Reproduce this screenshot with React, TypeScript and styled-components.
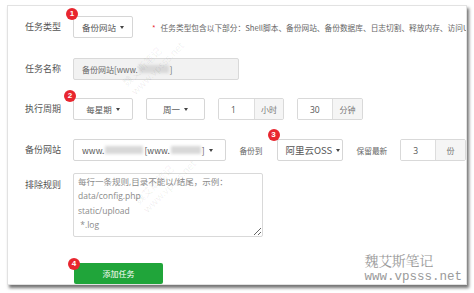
import React from 'react'
import styled, { createGlobalStyle } from 'styled-components'

const GlobalStyle = createGlobalStyle`
  html, body {
    margin: 0;
    padding: 0;
    background: #ffffff;
  }
  body {
    font-family: "Noto Sans CJK SC", "Open Sans", sans-serif;
    color: #555555;
  }
`;

const Blurred: React.FC<{ w: number }> = ({ w }) => <Blur style={{ width: w }} />;

const App: React.FC = () => {
  return (
    <>
      <GlobalStyle />
      <Page>
        <Panel>
          <Row>
            <Label>任务类型</Label>
            <Anchor>
              <Badge>1</Badge>
              <Select $w={60}>
                备份网站<Caret />
              </Select>
            </Anchor>
            <Hint>
              <Star>*</Star>任务类型包含以下部分：Shell脚本、备份网站、备份数据库、日志切割、释放内存、访问U
            </Hint>
          </Row>

          <Row $top={20}>
            <Label>任务名称</Label>
            <TextBox $w={166} $disabled>
              备份网站[www.<Blurred w={30} />]
            </TextBox>
          </Row>

          <Row $top={18}>
            <Label>执行周期</Label>
            <Anchor>
              <Badge $x={-9}>2</Badge>
              <Select $w={60} $center>
                每星期<Caret />
              </Select>
            </Anchor>
            <Select $w={59} $center $ml={13}>
              周一<Caret />
            </Select>
            <InputGroup $ml={13}>
              <InputCell $w={35}>1</InputCell>
              <Addon $w={28}>小时</Addon>
            </InputGroup>
            <InputGroup $ml={13}>
              <InputCell $w={34}>30</InputCell>
              <Addon $w={29}>分钟</Addon>
            </InputGroup>
          </Row>

          <Row $top={19}>
            <Label>备份网站</Label>
            <Select $w={154}>
              www.<Blurred w={38} />[www.<Blurred w={30} />]<Caret />
            </Select>
            <SideText $ml={13}>备份到</SideText>
            <Anchor $ml={14}>
              <Badge $x={-9} $y={-10}>3</Badge>
              <Select $w={66} $size={9.5}>
                阿里云OSS<Caret />
              </Select>
            </Anchor>
            <SideText $ml={14}>保留最新</SideText>
            <InputGroup $ml={13}>
              <InputCell $w={34}>3</InputCell>
              <Addon $w={29}>份</Addon>
            </InputGroup>
          </Row>

          <Row $top={12} $align="flex-start">
            <Label $pt={6}>排除规则</Label>
            <Rules
              placeholder={'每行一条规则,目录不能以/结尾，示例：\ndata/config.php\nstatic/upload\n *.log'}
            />
          </Row>

          <Row $top={26}>
            <Spacer />
            <Anchor>
              <Badge $x={-6} $y={-5}>4</Badge>
              <SubmitButton>添加任务</SubmitButton>
            </Anchor>
          </Row>

          <Faint style={{ left: 112, top: 74 }}>
            魏艾斯笔记
            <br />
            www.vpsss.net
          </Faint>
          <Faint style={{ left: 124, top: 192 }}>
            魏艾斯笔记
            <br />
            www.vpsss.net
          </Faint>

          <Stamp>
            <StampName>魏艾斯笔记</StampName>
            <StampUrl>www.vpsss.net</StampUrl>
          </Stamp>
        </Panel>
      </Page>
    </>
  )
}

export default App

const Page = styled.div`
  width: 474px;
  height: 293px;
  padding: 5px 0 0 7px;
  box-sizing: border-box;
`;

const Panel = styled.div`
  position: relative;
  width: 460px;
  height: 280px;
  box-sizing: border-box;
  padding: 10px 0 0 17px;
  background: #ffffff;
  border: 1px solid #e2e2e2;
  box-shadow: 2px 3px 3px rgba(0, 0, 0, 0.55);
  overflow: hidden;
`;

const Row = styled.div<{ $top?: number; $align?: string }>`
  display: flex;
  align-items: ${p => p.$align ?? 'center'};
  margin-top: ${p => p.$top ?? 0}px;
  white-space: nowrap;
`;

const Label = styled.div<{ $pt?: number }>`
  width: 48px;
  flex-shrink: 0;
  font-size: 9px;
  line-height: 12px;
  color: #555555;
  padding-top: ${p => p.$pt ?? 0}px;
`;

const Spacer = styled.div`
  width: 49px;
  flex-shrink: 0;
`;

const Anchor = styled.div<{ $ml?: number }>`
  position: relative;
  margin-left: ${p => p.$ml ?? 0}px;
  display: flex;
`;

const Badge = styled.span<{ $x?: number; $y?: number }>`
  position: absolute;
  left: ${p => p.$x ?? -7}px;
  top: ${p => p.$y ?? -8}px;
  width: 12px;
  height: 12px;
  border-radius: 50%;
  background: #e8262f;
  color: #ffffff;
  font-family: "Liberation Sans", sans-serif;
  font-size: 8px;
  font-weight: bold;
  line-height: 12px;
  text-align: center;
  z-index: 2;
`;

const Select = styled.div<{ $w: number; $center?: boolean; $ml?: number; $size?: number }>`
  display: flex;
  align-items: center;
  justify-content: ${p => (p.$center ? 'center' : 'flex-start')};
  width: ${p => p.$w}px;
  height: 22px;
  box-sizing: border-box;
  margin-left: ${p => p.$ml ?? 0}px;
  padding: 0 ${p => (p.$center ? 0 : 8)}px;
  border: 1px solid #d6d6d6;
  border-radius: 2px;
  background: #ffffff;
  font-size: ${p => p.$size ?? 8.5}px;
  color: #555555;
`;

const Caret = styled.span`
  display: inline-block;
  margin-left: 4px;
  width: 0;
  height: 0;
  border-left: 2.5px solid transparent;
  border-right: 2.5px solid transparent;
  border-top: 3px solid #444444;
`;

const Hint = styled.div`
  margin-left: 19px;
  font-size: 7.7px;
  color: #666666;
`;

const Star = styled.span`
  color: #e8262f;
  margin-right: 5px;
`;

const TextBox = styled.div<{ $w: number; $disabled?: boolean }>`
  display: flex;
  align-items: center;
  width: ${p => p.$w}px;
  height: 22px;
  box-sizing: border-box;
  padding-left: 8px;
  border: 1px solid #d9d9d9;
  border-radius: 2px;
  background: ${p => (p.$disabled ? '#f2f2f2' : '#ffffff')};
  font-size: 8px;
  color: #666666;
`;

const Blur = styled.span`
  display: inline-block;
  height: 8px;
  margin: 0 1px;
  background: #d8d8d8;
  filter: blur(1.5px);
`;

const InputGroup = styled.div<{ $ml?: number }>`
  display: flex;
  height: 22px;
  margin-left: ${p => p.$ml ?? 0}px;
  border: 1px solid #d9d9d9;
  border-radius: 2px;
  box-sizing: border-box;
  overflow: hidden;
`;

const InputCell = styled.div<{ $w: number }>`
  width: ${p => p.$w}px;
  box-sizing: border-box;
  padding-left: 12px;
  display: flex;
  align-items: center;
  background: #ffffff;
  font-family: "Open Sans", sans-serif;
  font-size: 8.5px;
  color: #555555;
`;

const Addon = styled.div<{ $w: number }>`
  width: ${p => p.$w}px;
  display: flex;
  align-items: center;
  justify-content: center;
  border-left: 1px solid #dddddd;
  background: #f5f5f5;
  font-size: 8px;
  color: #777777;
`;

const SideText = styled.span<{ $ml?: number }>`
  margin-left: ${p => p.$ml ?? 0}px;
  font-size: 7.7px;
  color: #666666;
`;

const Rules = styled.textarea`
  width: 190px;
  height: 64px;
  box-sizing: border-box;
  margin: 0;
  padding: 1px 4px;
  border: 1px solid #d9d9d9;
  border-radius: 2px;
  font-family: "Open Sans", "Noto Sans CJK SC", sans-serif;
  font-size: 8.5px;
  line-height: 14.3px;
  color: #555555;
  resize: both;
  outline: none;
  &::placeholder {
    color: #8a8a8a;
  }
`;

const SubmitButton = styled.button`
  width: 89px;
  height: 21px;
  border: none;
  border-radius: 2px;
  background: #20a53a;
  color: #ffffff;
  font-family: "Noto Sans CJK SC", sans-serif;
  font-size: 8px;
  padding: 0;
`;

const Faint = styled.div`
  position: absolute;
  font-size: 10px;
  line-height: 12px;
  color: rgba(0, 0, 0, 0.07);
  transform: rotate(-45deg);
  transform-origin: left top;
  pointer-events: none;
  white-space: nowrap;
`;

const Stamp = styled.div`
  position: absolute;
  right: 4px;
  bottom: 0;
  display: flex;
  flex-direction: column;
  align-items: flex-start;
  color: #9a9a9a;
`;

const StampName = styled.span`
  font-family: "Noto Serif CJK SC", "Noto Sans CJK SC", serif;
  font-size: 14px;
  line-height: 20px;
  letter-spacing: -0.3px;
`;

const StampUrl = styled.span`
  font-family: "Liberation Mono", monospace;
  font-size: 12.5px;
  line-height: 14px;
`;
